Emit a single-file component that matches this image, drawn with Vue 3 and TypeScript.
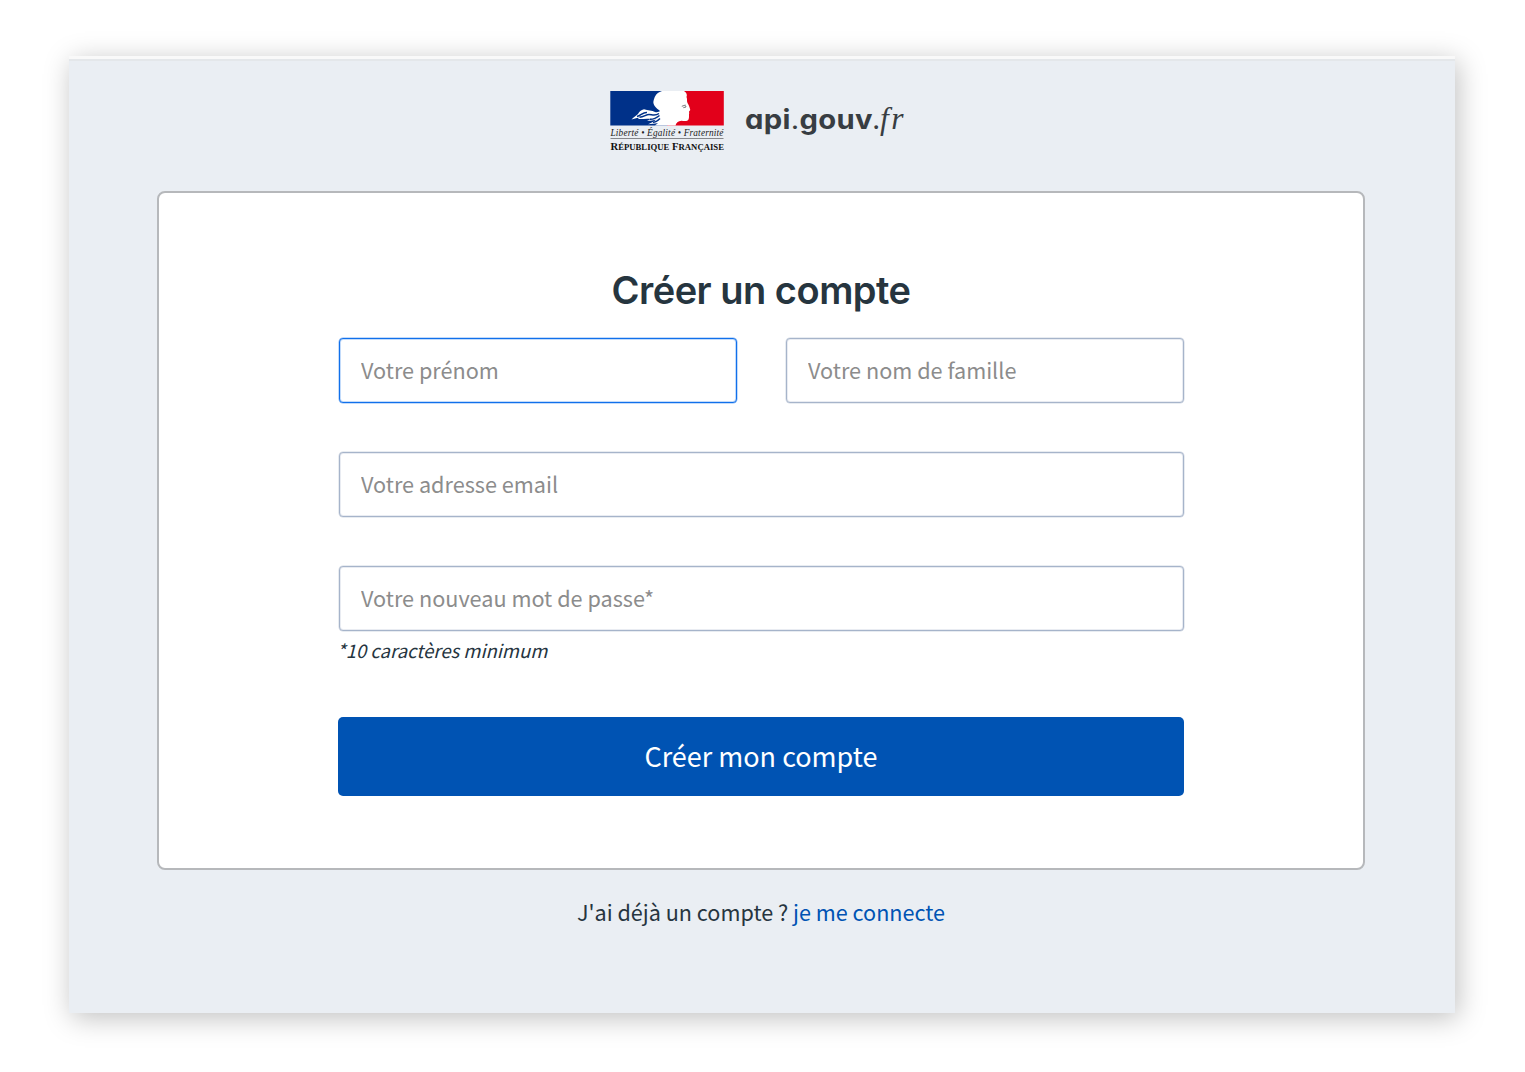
<script setup lang="ts">
import { ref } from 'vue'

const firstName = ref('')
const lastName = ref('')
const email = ref('')
const password = ref('')
</script>

<template>
  <div class="page">
    <main class="window">
      <header class="brand">
        <svg class="logo" width="300" height="66" viewBox="0 0 300 66" role="img" aria-label="api.gouv.fr">
          <rect x="0.300" y="1" width="57" height="34.500" fill="#003189" />
          <rect x="57" y="1" width="56.800" height="34.500" fill="#e2001a" />
          <path
            fill="#fff"
            d="M52 1 L74 1 C76.500 2.500 77.500 4.500 76.500 7 C77.500 9 76.500 11 77.500 13 C79.500 16 79.300 17 80.200 19.500 C80.500 20.700 79 21 79 22 C79.500 23 79 24 79 25 C79 26 79.200 28 78.500 29.500 C77.500 31.500 74.500 31.200 71.500 30.800 C68 31 66 33 65.500 35.500 L45 35.500 C46 34.300 47 33.800 48 33.200 C45 33 42 34 38 34.300 C41 33 44 31.500 46 29.700 C43 30 41 31 37 30.800 L41 29 C36 28 32 29.500 28 29 L29 27.700 C26 28 24 29 21.500 29.500 C24 27 26 25.500 28 24 C29 22 31 20 34 19.300 C38 20.500 42 20.500 45 22 C47 22.500 49 22 50 21 C46 18 42.500 14.500 43.500 11 C44.500 8 45 3 52 1 Z"
          />
          <path
            fill="none"
            stroke="#003189"
            stroke-width="1.500"
            d="M27 26.500 C31 25.500 33 22 37 22.500 M29.500 27.300 C34 27 36 24.500 39 24.500 C42 24.500 45 26.500 49 23.500 M40 29.300 C44 29.500 47 27.500 49.500 25.500 M43 32.300 C46 32.300 48 30.500 50 28.500"
          />
          <path fill="none" stroke="#77797d" stroke-width="1" d="M71.800 16.300 L75.500 15 M73.300 17.700 L76 17 L75.500 15.500" />
          <text class="motto" x="0.500" y="45.500" textLength="113">Liberté • Égalité • Fraternité</text>
          <rect x="0.500" y="48" width="113" height="1" fill="#85878b" />
          <text class="republic" x="0.500" y="59.500" textLength="113.500" lengthAdjust="spacingAndGlyphs">R<tspan class="small">ÉPUBLIQUE</tspan> F<tspan class="small">RANÇAISE</tspan></text>
          <text class="site" x="135" y="39.200" textLength="128" lengthAdjust="spacingAndGlyphs">api<tspan class="dot">.</tspan>gouv</text>
          <text class="tld" x="263" y="39.200">.</text>
          <text class="tld" x="270" y="39.200" textLength="23.500">fr</text>
        </svg>
      </header>

      <section class="card">
        <h1>Créer un compte</h1>
        <form @submit.prevent>
          <div class="row">
            <input v-model="firstName" class="focused" type="text" placeholder="Votre prénom" />
            <input v-model="lastName" type="text" placeholder="Votre nom de famille" />
          </div>
          <input v-model="email" type="email" placeholder="Votre adresse email" />
          <input v-model="password" type="password" placeholder="Votre nouveau mot de passe*" />
          <p class="hint">*10 caractères minimum</p>
          <button type="submit">Créer mon compte</button>
        </form>
      </section>

      <p class="login"><span>J'ai déjà un compte ?</span> <a href="#">je me connecte</a></p>
    </main>
  </div>
</template>

<style>
body {
  background: #fff;
}
</style>

<style scoped>
* {
  box-sizing: border-box;
}
.page {
  height: 1072px;
  padding: 56px 0 0 69px;
}
.window {
  display: flex;
  flex-direction: column;
  align-items: center;
  width: 1386px;
  height: 957px;
  padding-right: 2px;
  border-top: 3px solid #f9f9f9;
  background: #eaeef3;
  box-shadow: 3px 5px 26px rgba(0, 0, 0, 0.25);
  color: #26353f;
  font-family: "Noto Sans CJK SC", "Noto Sans", sans-serif;
}
.brand {
  display: flex;
  width: 1386px;
  height: 132px;
  margin-right: -2px;
  padding: 29px 0 0 541px;
  border-top: 2px solid #e4e7ea;
}
.logo {
  flex: none;
}
.motto {
  font: italic 9.300px "Liberation Serif", serif;
  fill: #222;
}
.republic {
  font: bold 11px "Liberation Serif", serif;
  fill: #111;
}
.small {
  font-size: 9px;
}
.site {
  font: 700 27px Inter, sans-serif;
  font-feature-settings: "cv11";
  letter-spacing: 0.300px;
  fill: #383d42;
}
.dot {
  font-weight: 400;
}
.tld {
  font: italic 31.500px "Liberation Serif", serif;
  fill: #383d42;
}
.card {
  width: 1208px;
  height: 679px;
  padding: 67px 179px 0;
  border: 2px solid #b6b8bb;
  border-radius: 8px;
  background: #fff;
}
h1 {
  margin: 0;
  height: 78px;
  font: 600 38px/60px Inter, sans-serif;
  letter-spacing: -0.500px;
  text-align: center;
  white-space: nowrap;
}
form {
  display: flex;
  flex-direction: column;
}
.row {
  display: grid;
  grid-template-columns: 1fr 1fr;
  gap: 49px;
  padding: 0 0 0 1px;
}
input {
  height: 65px;
  margin: 0 0 49px 1px;
  padding: 0 21px 3px;
  border: 1px solid #a6b4ca;
  border-radius: 4px;
  outline: 0;
  box-shadow: inset 0 0 0 1px rgba(166, 180, 202, 0.25), 0 0 0 0.500px rgba(166, 180, 202, 0.5);
  background: #fff;
  color: #26353f;
  font: 400 21.650px "Noto Sans CJK SC", sans-serif;
}
.row input {
  width: 100%;
  margin: 0 0 49px;
}
input::placeholder {
  color: #8c8c8c;
  opacity: 1;
}
input.focused {
  border-color: #1070eb;
  box-shadow: inset 0 0 0 1px rgba(16, 112, 235, 0.25), 0 0 0 0.500px rgba(16, 112, 235, 0.5);
}
.hint {
  height: 40px;
  margin: -49px 0 46px;
  font-size: 18.500px;
  line-height: 38px;
  font-style: italic;
  text-indent: -1px;
}
button {
  height: 79px;
  padding: 0 0 3px;
  border: 0;
  border-radius: 5px;
  background: #0053b3;
  color: #fff;
  font: 400 27px "Noto Sans CJK SC", sans-serif;
}
.login {
  margin: 25px 0 0;
  font-size: 21.600px;
  line-height: 34px;
  white-space: nowrap;
}
.login a {
  color: #0053b3;
  text-decoration: none;
}
</style>
